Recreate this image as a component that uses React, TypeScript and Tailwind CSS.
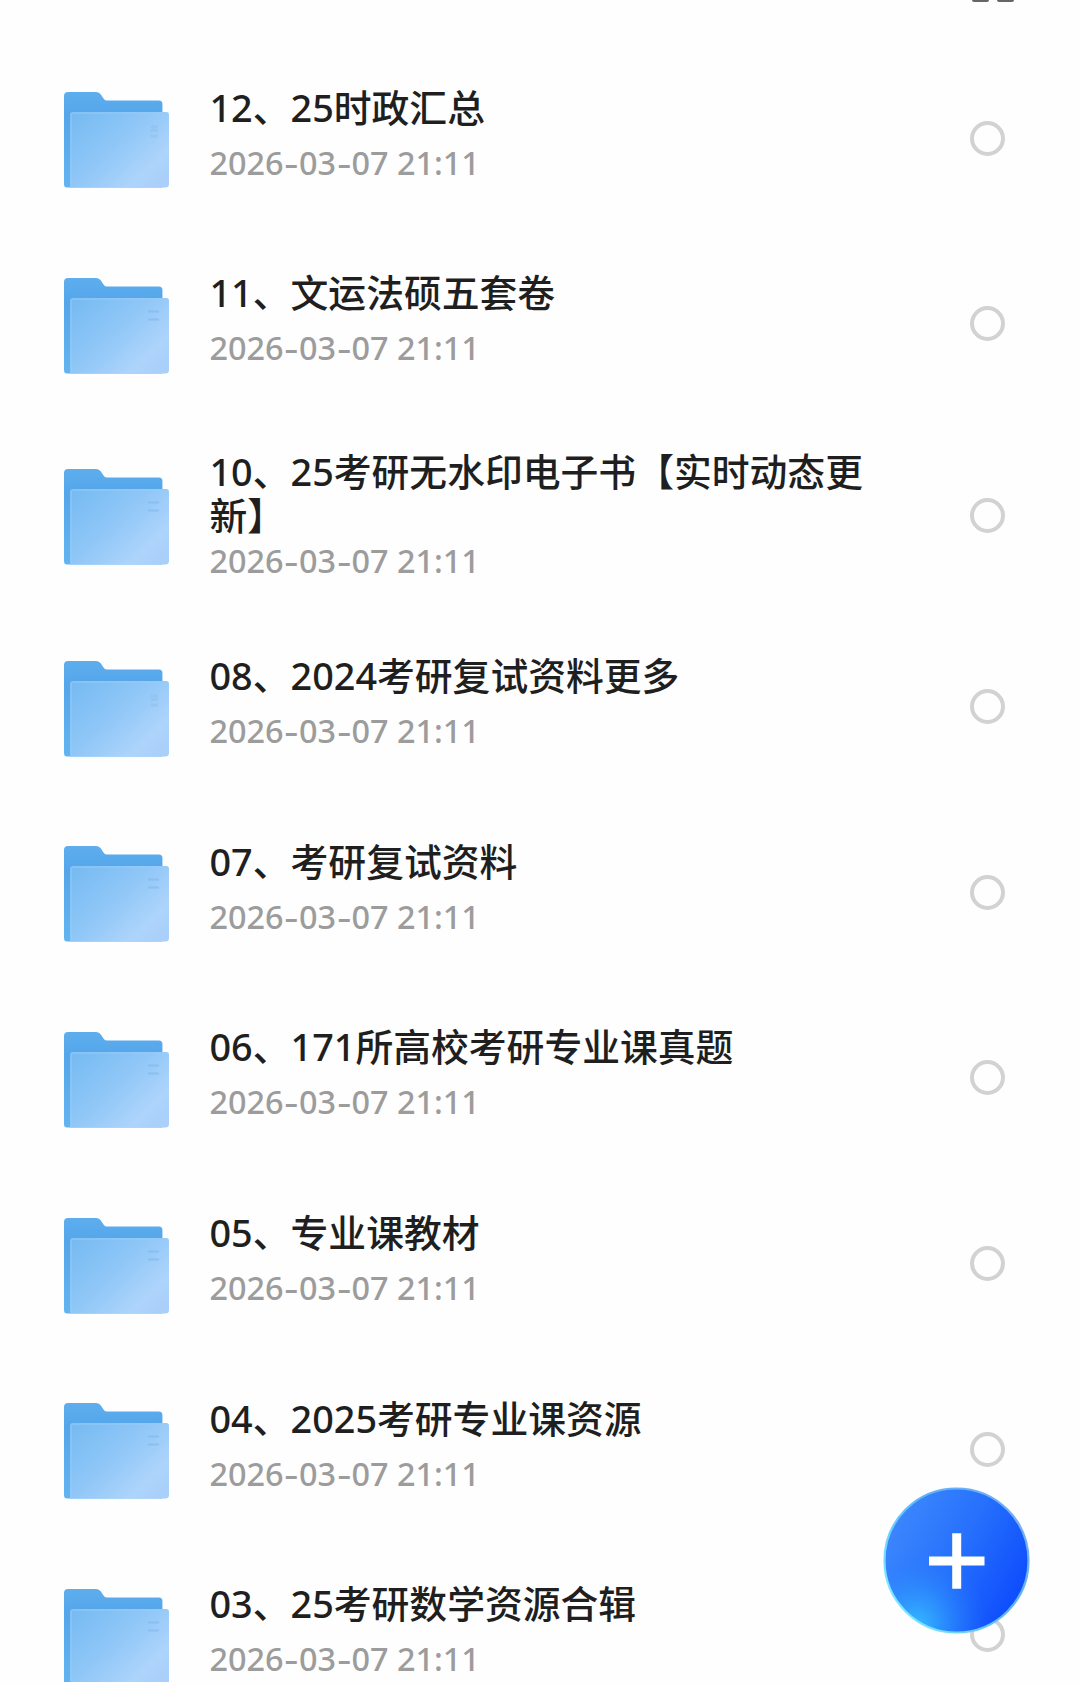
type Entry = { title: string; tall?: boolean; plain?: boolean };

const entries: Entry[] = [
  { title: "12、25时政汇总", plain: true },
  { title: "11、文运法硕五套卷" },
  { title: "10、25考研无水印电子书【实时动态更新】", tall: true },
  { title: "08、2024考研复试资料更多", plain: true },
  { title: "07、考研复试资料" },
  { title: "06、171所高校考研专业课真题" },
  { title: "05、专业课教材" },
  { title: "04、2025考研专业课资源" },
  { title: "03、25考研数学资源合辑" },
];

function FolderIcon({ plain }: { plain?: boolean }) {
  return (
    <svg width="107" height="98" viewBox="0 0 106 98" preserveAspectRatio="none" className="block shrink-0">
      <defs>
        <linearGradient id="back" x1="0" y1="0" x2="0" y2="1">
          <stop offset="0" stopColor="#5eaeee" />
          <stop offset="0.25" stopColor="#54a6ea" />
          <stop offset="1" stopColor="#62b4f0" />
        </linearGradient>
        <linearGradient id="front" x1="0" y1="0.1" x2="1" y2="0.9">
          <stop offset="0" stopColor="#77bbf2" />
          <stop offset="0.45" stopColor="#90c7f7" />
          <stop offset="0.8" stopColor="#add4fb" />
          <stop offset="1" stopColor="#a9cffa" />
        </linearGradient>
      </defs>
      <path
        d="M1 5Q1 1 5 1H33Q36 1 37.500 3.500L40.500 8Q41.500 9.500 44 9.500H95Q98.500 9.500 98.500 13V96.500H4Q1 96.500 1 93Z"
        fill="url(#back)"
      />
      <path d="M7 24Q7 21 10 21H102Q105 21 105 24V93Q105 96.500 101.500 96.500H7Z" fill="url(#front)" />
      <path d="M8 95V24Q8 22 10 22H102Q104 22 104 24" fill="none" stroke="#9accf6" strokeWidth="2" opacity="0.45" />
      {plain ? (
        <path d="M87 36H94M87 39.500H94M87 45H94" stroke="#7fb8ee" strokeWidth="3" opacity="0.3" />
      ) : (
        <path d="M84 34.500H95M84 42.500H95" stroke="#7fb8ee" strokeWidth="2" opacity="0.6" />
      )}
    </svg>
  );
}

function Dash() {
  return (
    <span className="inline-block w-[15.400px] text-center">
      <span className="inline-block scale-x-[1.350]">-</span>
    </span>
  );
}

function Row({ title, tall, plain }: Entry) {
  return (
    <li className={tall ? "flex h-[197.400px] items-center pl-[63px]" : "flex h-[185.600px] items-center pl-[63px]"}>
      <div className="pt-[4px]">
        <FolderIcon plain={plain} />
      </div>
      <div className={tall ? "ml-[39.500px] w-[680px] self-start pt-[33.600px]" : "ml-[39.500px] w-[680px] self-start pt-[40.200px]"}>
        <div className="text-[37.800px] leading-[44px] font-medium text-[#1f1f1f]">{title}</div>
        <div
          className={
            tall
              ? "text-[32.400px] leading-[44px] font-medium whitespace-nowrap text-[#9c9c9c]"
              : "mt-[10px] text-[32.400px] leading-[44px] font-medium whitespace-nowrap text-[#9c9c9c]"
          }
        >
          2026
          <Dash />
          03
          <Dash />
          07 21:11
        </div>
      </div>
      <div className="ml-[80.500px] size-[35px] shrink-0 rounded-full border-4 border-[#d2d2d2]" />
    </li>
  );
}

function AddButton() {
  return (
    <button
      aria-label="add"
      className="absolute top-[1487px] left-[883px] block size-[147px] rounded-full"
    >
      <svg viewBox="0 0 147 147" className="block size-full">
        <defs>
          <linearGradient id="fab" x1="0.1" y1="0.2" x2="0.95" y2="0.65">
            <stop offset="0" stopColor="#3b86fd" />
            <stop offset="0.5" stopColor="#2670fc" />
            <stop offset="1" stopColor="#0f4ffd" />
          </linearGradient>
          <radialGradient id="glow" cx="0.22" cy="0.95" r="0.5">
            <stop offset="0" stopColor="#36bcff" />
            <stop offset="0.4" stopColor="#30a4fe" stopOpacity="0.6" />
            <stop offset="1" stopColor="#2878fc" stopOpacity="0" />
          </radialGradient>
          <linearGradient id="rim" x1="0.1" y1="0.8" x2="0.9" y2="0.2">
            <stop offset="0" stopColor="#7ce6ff" />
            <stop offset="0.6" stopColor="#5cb4f8" />
            <stop offset="1" stopColor="#74aef5" />
          </linearGradient>
        </defs>
        <circle cx="73.500" cy="73.500" r="72" fill="url(#fab)" />
        <circle cx="73.500" cy="73.500" r="72" fill="url(#glow)" />
        <circle cx="73.500" cy="73.500" r="72" fill="none" stroke="url(#rim)" strokeWidth="2.200" />
        <path d="M46 74H101.500M73.700 46.200V101.800" stroke="#fff" strokeWidth="9" />
      </svg>
    </button>
  );
}

export default function App() {
  return (
    <main className="relative h-[1686px] w-[1080px] overflow-hidden bg-[#fefefe] font-['Noto_Sans','Noto_Sans_CJK_SC',sans-serif]">
      <div className="h-[1682px] overflow-hidden">
        <header className="flex h-[45.400px] items-start gap-[8px] pl-[972px]">
          <span className="h-[2px] w-[17px] rounded-b-full bg-[#666]" />
          <span className="h-[2px] w-[17px] rounded-b-full bg-[#666]" />
        </header>
        <ul>
          {entries.map((e) => (
            <Row key={e.title} {...e} />
          ))}
        </ul>
      </div>
      <AddButton />
    </main>
  );
}
